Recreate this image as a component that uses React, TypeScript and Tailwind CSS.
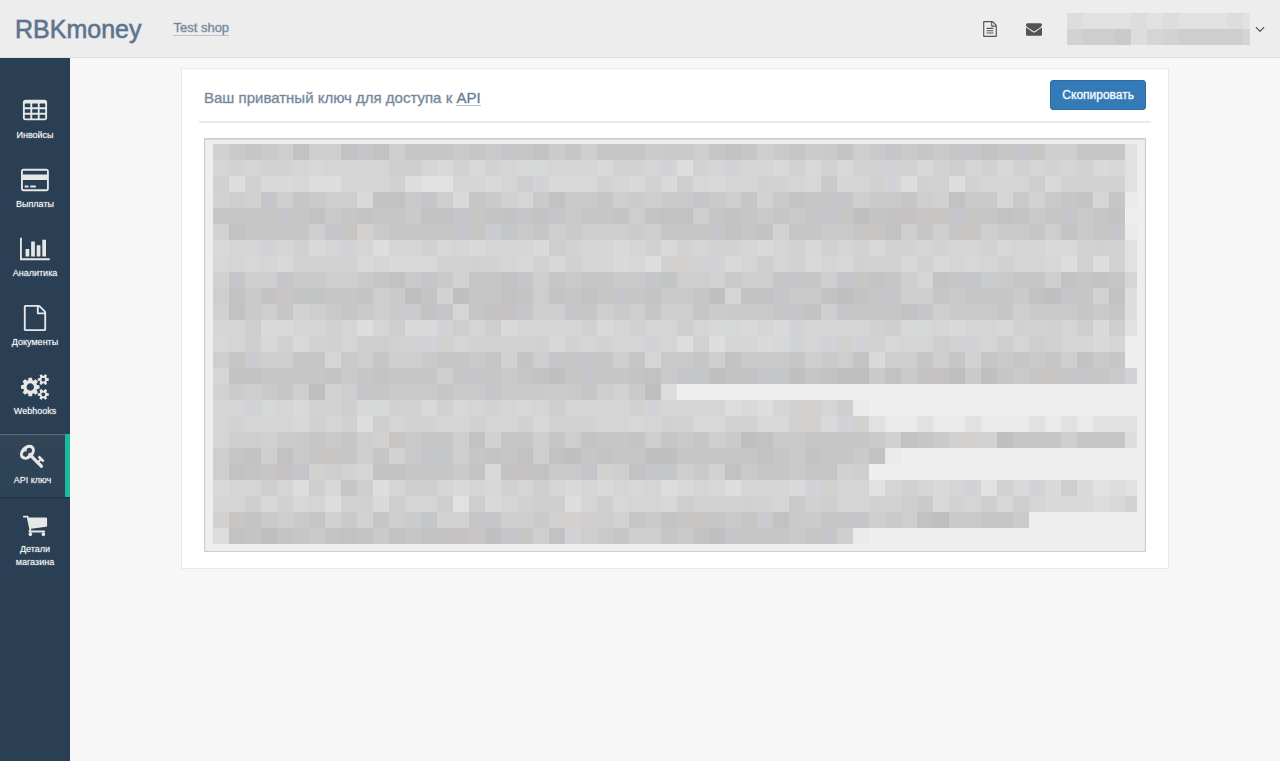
import React from "react";

const ICONS = {
  table:
    "M576 1376v-192q0-14-9-23t-23-9h-320q-14 0-23 9t-9 23v192q0 14 9 23t23 9h320q14 0 23-9t9-23zm0-384v-192q0-14-9-23t-23-9h-320q-14 0-23 9t-9 23v192q0 14 9 23t23 9h320q14 0 23-9t9-23zm512 384v-192q0-14-9-23t-23-9h-320q-14 0-23 9t-9 23v192q0 14 9 23t23 9h320q14 0 23-9t9-23zm-512-768v-192q0-14-9-23t-23-9h-320q-14 0-23 9t-9 23v192q0 14 9 23t23 9h320q14 0 23-9t9-23zm512 384v-192q0-14-9-23t-23-9h-320q-14 0-23 9t-9 23v192q0 14 9 23t23 9h320q14 0 23-9t9-23zm512 384v-192q0-14-9-23t-23-9h-320q-14 0-23 9t-9 23v192q0 14 9 23t23 9h320q14 0 23-9t9-23zm-512-768v-192q0-14-9-23t-23-9h-320q-14 0-23 9t-9 23v192q0 14 9 23t23 9h320q14 0 23-9t9-23zm512 384v-192q0-14-9-23t-23-9h-320q-14 0-23 9t-9 23v192q0 14 9 23t23 9h320q14 0 23-9t9-23zm0-384v-192q0-14-9-23t-23-9h-320q-14 0-23 9t-9 23v192q0 14 9 23t23 9h320q14 0 23-9t9-23zm128-320v1088q0 66-47 113t-113 47h-1344q-66 0-113-47t-47-113v-1088q0-66 47-113t113-47h1344q66 0 113 47t47 113z",
  card:
    "M1760 128q66 0 113 47t47 113v1216q0 66-47 113t-113 47h-1600q-66 0-113-47t-47-113v-1216q0-66 47-113t113-47h1600zm-1600 128q-13 0-22.5 9.5t-9.5 22.5v224h1664v-224q0-13-9.5-22.5t-22.5-9.5h-1600zm1600 1280q13 0 22.5-9.5t9.5-22.5v-608h-1664v608q0 13 9.5 22.5t22.5 9.5h1600zm-1504-128v-128h256v128h-256zm384 0v-128h384v128h-384z",
  chart:
    "M640 896v512h-256v-512h256zm384-512v1024h-256v-1024h256zm1024 1152v128h-2048v-1536h128v1408h1920zm-640-896v768h-256v-768h256zm384-384v1152h-256v-1152h256z",
  file:
    "M1596 380q28 28 48 76t20 88v1152q0 40-28 68t-68 28h-1344q-40 0-68-28t-28-68v-1600q0-40 28-68t68-28h896q40 0 88 20t76 48zm-444-244v376h376q-10-29-22-41l-313-313q-12-12-41-22zm384 1528v-1024h-416q-40 0-68-28t-28-68v-416h-768v1536h1280z",
  fileLines:
    "M512 800q0-14 9-23t23-9h704q14 0 23 9t9 23v64q0 14-9 23t-23 9h-704q-14 0-23-9t-9-23v-64zm736 224q14 0 23 9t9 23v64q0 14-9 23t-23 9h-704q-14 0-23-9t-9-23v-64q0-14 9-23t23-9h704zm0 256q14 0 23 9t9 23v64q0 14-9 23t-23 9h-704q-14 0-23-9t-9-23v-64q0-14 9-23t23-9h704z",
  cogs:
    "M896 896q0-106-75-181t-181-75-181 75-75 181 75 181 181 75 181-75 75-181zm768 512q0-52-38-90t-90-38-90 38-38 90q0 53 37.5 90.5t90.5 37.5 90.5-37.5 37.5-90.5zm0-1024q0-52-38-90t-90-38-90 38-38 90q0 53 37.5 90.5t90.5 37.5 90.5-37.5 37.5-90.5zm-384 421v185q0 10-7 19.5t-16 10.5l-155 24q-11 35-32 76 34 48 90 115 7 11 7 20 0 12-7 19-23 30-82.5 89.5t-78.5 59.5q-11 0-21-7l-115-90q-37 19-77 31-11 108-23 155-7 24-30 24h-186q-11 0-20-7.5t-10-17.5l-23-153q-34-10-75-31l-118 89q-7 7-20 7-11 0-21-8-144-133-144-160 0-9 7-19 10-14 41-53t47-61q-23-44-35-82l-152-24q-10-1-17-9.5t-7-19.5v-185q0-10 7-19.5t16-10.5l155-24q11-35 32-76-34-48-90-115-7-11-7-20 0-12 7-20 22-30 82-89t79-59q11 0 21 7l115 90q34-18 77-32 11-108 23-154 7-24 30-24h186q11 0 20 7.5t10 17.5l23 153q34 10 75 31l118-89q8-7 20-7 11 0 21 8 144 133 144 160 0 8-7 19-12 16-42 54t-45 60q23 48 34 82l152 23q10 2 17 10.5t7 19.5zm640 533v140q0 16-149 31-12 27-30 52 51 113 51 138 0 4-4 7-122 71-124 71-8 0-46-47t-52-68q-20 2-30 2t-30-2q-14 21-52 68t-46 47q-2 0-124-71-4-3-4-7 0-25 51-138-18-25-30-52-149-15-149-31v-140q0-16 149-31 13-29 30-52-51-113-51-138 0-4 4-7 4-2 35-20t59-34 30-16q8 0 46 46.5t52 67.5q20-2 30-2t30 2q51-71 92-112l6-2q4 0 124 70 4 3 4 7 0 25-51 138 17 23 30 52 149 15 149 31zm0-1024v140q0 16-149 31-12 27-30 52 51 113 51 138 0 4-4 7-122 71-124 71-8 0-46-47t-52-68q-20 2-30 2t-30-2q-14 21-52 68t-46 47q-2 0-124-71-4-3-4-7 0-25 51-138-18-25-30-52-149-15-149-31v-140q0-16 149-31 13-29 30-52-51-113-51-138 0-4 4-7 4-2 35-20t59-34 30-16q8 0 46 46.5t52 67.5q20-2 30-2t30 2q51-71 92-112l6-2q4 0 124 70 4 3 4 7 0 25-51 138 17 23 30 52 149 15 149 31z",
  key:
    "M832 512q0-80-56-136t-136-56-136 56-56 136q0 42 19 83-41-19-83-19-80 0-136 56t-56 136 56 136 136 56 136-56 56-136q0-42-19-83 41 19 83 19 80 0 136-56t56-136zm851 704q0 17-49 66t-66 49q-9 0-28.5-16t-36.5-33-38.5-40-24.5-26l-96 96 220 220q28 28 28 68 0 42-39 81t-81 39q-40 0-68-28l-671-671q-176 131-365 131-163 0-265.5-102.5t-102.5-265.5q0-160 95-313t248-248 313-95q163 0 265.5 102.5t102.5 265.5q0 189-131 365l355 355 96-96q-3-3-26-24.5t-40-38.5-33-36.5-16-28.5q0-17 49-66t66-49q13 0 23 10 6 6 46 44.5t82 79.5 86.5 86 73 78 28.5 41z",
  cart:
    "M704 1536q0 52-38 90t-90 38-90-38-38-90 38-90 90-38 90 38 38 90zm896 0q0 52-38 90t-90 38-90-38-38-90 38-90 90-38 90 38 38 90zm128-1088v512q0 24-16.5 42.5t-40.5 21.5l-1044 122q13 60 13 70 0 16-24 64h920q26 0 45 19t19 45-19 45-45 19h-1024q-26 0-45-19t-19-45q0-11 8-31.5t16-36 21.5-40 15.5-29.5l-177-823h-204q-26 0-45-19t-19-45 19-45 45-19h256q16 0 28.5 6.5t19.5 15.5 13 24.5 8 26 5.5 29.5 4.5 26h1201q26 0 45 19t19 45z",
  envelope:
    "M1792 710v794q0 66-47 113t-113 47h-1472q-66 0-113-47t-47-113v-794q44 49 101 87 362 246 497 345 57 42 92.5 65.5t94.5 48 110 24.5h2q51 0 110-24.5t94.5-48 92.5-65.5q170-123 498-345 57-39 100-87zm0-294q0 79-49 151t-122 123q-376 261-468 325-10 7-42.5 31t-54 38.5-52 32.5-57.5 27-50 9h-2q-23 0-50-9t-57.5-27-52-32.5-54-38.5-42.5-31q-91-64-262-182.5t-205-142.5q-62-42-117-115.5t-55-136.5q0-78 41.5-130t118.5-52h1472q65 0 112.5 47t47.5 113z",
  angleDown:
    "M1395 736q0 13-10 23l-466 466q-10 10-23 10t-23-10l-466-466q-10-10-10-23t10-23l50-50q10-10 23-10t23 10l393 393 393-393q10-10 23-10t23 10l50 50q10 10 10 23z",
};

function Icon({ d, width = 1792, className }: { d: string; width?: number; className: string }) {
  return (
    <svg viewBox={`0 0 ${width} 1792`} className={className} fill="currentColor" aria-hidden="true">
      <path d={d} />
    </svg>
  );
}

const SHADES: Record<string, string> = {
  "0": "#bfbfbf",
  "1": "#c2c2c2",
  "2": "#c6c6c6",
  "3": "#cacaca",
  "4": "#cecece",
  "5": "#d2d2d2",
  "6": "#d5d5d5",
  "7": "#d9d9d9",
  "8": "#dddddd",
  "9": "#e1e1e1",
  "-": "#eaeaea",
  w: "#c8c6c4",
  v: "#d2d1cf",
  g: "#c2c5c4",
  h: "#d5d8d7",
  n: "#cacccb",
  b: "#c4c6c9",
  a: "#d1d3d6",
  m: "#c9cbce",
  p: "#c5c2c3",
  q: "#d0cdce",
};

const KEY_ROWS = [
  "v3w341441b14222323 b21nw4222n334212432n 3g43b3w32b1wbw44w229",
  "656556h66664467575 6hh6667556a856a66757 57655a5h546vhv65657h9".replace("57655", "5755"),
  "v8v77h88666v899667 64a77756757 4h766v56h 366va8v58566647555 59",
  "54vb423447p13b4723 v63133w4n433b34w53g2 2b433w4v133635 3wg6w-",
  "w22wb213wg22311bwg pbpb32wg4g1142p23w32 bw0gppwwbw21g3wb32p.",
  "5122224bwv3w22wbwm b3w43444n422wb12p52w 33ww1424ww433w4g3wb-",
  "766a6v76a6866vh676 66745667 6v756556765h v6575565665h66775v59",
  "h6h67555576777 55v5 6h5hv667h8vv5a764657 6hv55h576h6v66h85859",
  "vb44b33q43w13b35w2 1b4w32w33bg445344 2b2 4bwg246g2bm3224p2p26",
  "4p3pwgg22g430g5022 1g4gw1wb2g332061 1b33 p0p2b44w3w2231 0b2518",
  "v134w543w343mpb62p pb44b24342442n3332bp 4b2221b4333w43332328",
  "6647766v686477a464 76666v76v6646hh767a6 666v4hh6766hv5v64749",
  "h64hv75v644v5av655 55vh56566a685 8667ha6 ava5h6645a6464v6676.",
  "4wm44226342443w232 vg4b2b2426332 4p33324 34g744w4252323w4p32.",
  "6p1w222g32gw2242b2 32p0wb22g13bb0p1bb02 p003 13pp03023ww2b23a",
  "5n432405qb2333w33b 333n3245308......... ....................",
  "66ah67554hhv57vh65 6h646666va6666 8786vv 6q-.................",
  "65666hv6v8465566v6 6vh55566h6v5775577vv7 av9--9--9---9-9-999-",
  "644vn323w4vw32w41v 2242 4g2wg4w3w4301332 2223v1w3vv5022w4w228",
  "42p413ww24253bb4wg w1410wg2200222221 23p 2231-...............",
  "q1gwpbv456p12w23g7 pp133bv41bb435132w32 2v4.................",
  "7664684h248644676h v646767 6h6876h86667a v6696v676a957a7q7989",
  "664hvh685v74664947 6v44864h66h4555v563v 466v54 37564h467778759",
  "vwg3q32v3524nb552b 443vvq4523gww23wm13n w2b434 1033 22n.......",
  "81g0g23g1g3121ppw0 bw41a43244w3p0b2w23w b4-.................",
].map((row) => row.replace(/ /g, ""));

const USER_ROWS = ["899989899989", "544386544446"];

function Mosaic({
  rows,
  width,
  label,
  className,
}: {
  rows: string[];
  width: number;
  label: string;
  className: string;
}) {
  return (
    <svg
      role="img"
      aria-label={label}
      viewBox={`0 0 ${width} ${rows.length * 16}`}
      preserveAspectRatio="none"
      shapeRendering="crispEdges"
      className={className}
    >
      {rows.map((row, y) =>
        [...row].map((cell, x) =>
          SHADES[cell] ? (
            <rect key={`${x}-${y}`} x={x * 16} y={y * 16} width={16} height={16} fill={SHADES[cell]} />
          ) : null,
        ),
      )}
    </svg>
  );
}

const NAV = [
  { label: "Инвойсы", icon: ICONS.table },
  { label: "Выплаты", icon: ICONS.card, width: 1920 },
  { label: "Аналитика", icon: ICONS.chart, width: 2048 },
  { label: "Документы", icon: ICONS.file },
  { label: "Webhooks", icon: ICONS.cogs, width: 1920 },
  { label: "API ключ", icon: ICONS.key, active: true },
  { label: "Детали магазина", icon: ICONS.cart },
];

export default function App() {
  return (
    <div className="flex min-h-screen flex-col bg-[#f7f7f7] font-['Liberation_Sans',Arial,sans-serif] text-[#73879c]">
      <header className="flex h-[58px] items-center border-b border-[#d9dee4] bg-[#ededed] pr-3 pl-[15px]">
        <a href="#" className="pt-[2px] text-[25px] font-medium text-[#5a738e] [-webkit-text-stroke:1px_#5a738e99]">
          RBKmoney
        </a>
        <a
          href="#"
          className="ml-8 border-b border-[#b4c4d6] text-[13px] leading-[14px] [-webkit-text-stroke:1px_#73879c55]"
        >
          Test shop
        </a>
        <div className="ml-auto flex items-center text-[#515356]">
          <button type="button" aria-label="Документы" className="mr-7">
            <Icon d={ICONS.file + ICONS.fileLines} className="h-4 w-4" />
          </button>
          <button type="button" aria-label="Сообщения" className="mr-[25px]">
            <Icon d={ICONS.envelope} className="h-4 w-4" />
          </button>
          <button type="button" aria-label="Меню пользователя" className="flex items-center gap-[2px]">
            <Mosaic rows={USER_ROWS} width={183} label="Пользователь" className="h-8 w-[183px]" />
            <Icon d={ICONS.angleDown} className="h-4 w-4" />
          </button>
        </div>
      </header>

      <div className="flex flex-1">
        <nav className="w-[70px] shrink-0 bg-[#2a3f54] pt-[31px]">
          <ul className="flex flex-col gap-[6px]">
            {NAV.map((item) => (
              <li key={item.label}>
                <a
                  href="#"
                  aria-current={item.active ? "page" : undefined}
                  className={
                    item.active
                      ? "flex flex-col items-center gap-[5px] border-r-[5px] border-[#1abb9c] bg-linear-to-b from-[#334556] to-[#2c4257] pt-[9px] pb-[10px] text-[#e7e7e7] shadow-[inset_0_1px_0_#5b6b7b,0_1px_0_#1d2f42]"
                      : "flex flex-col items-center gap-[5px] px-[5px] pt-[9px] pb-[10px] text-[#e7e7e7]"
                  }
                >
                  <Icon d={item.icon} width={item.width} className="h-[26px] w-auto" />
                  <span className="text-center text-[9px] leading-[13px] font-medium text-white [-webkit-text-stroke:1px_#ffffff33]">
                    {item.label}
                  </span>
                </a>
              </li>
            ))}
          </ul>
        </nav>

        <main className="min-w-0 flex-1 px-5 py-[10px]">
          <section className="mx-auto max-w-[988px] border border-[#e6e9ed] bg-white px-[17px] pt-[11px] pb-4">
            <div className="flex items-start justify-between border-b-2 border-[#e6e9ed] px-[5px] pb-[11px]">
              <h1 className="pt-[9px] text-[15px] leading-[18px] font-medium [-webkit-text-stroke:1px_#73879c55]">
                <label htmlFor="api-key">Ваш приватный ключ для доступа к </label>
                <a href="#" className="inline-block border-b border-[#b4c4d6] leading-[15px] text-[#5a738e]">
                  API
                </a>
              </h1>
              <button
                type="button"
                className="h-[30px] rounded-[3px] border border-[#2e6da4] bg-[#337ab7] px-[11px] text-[12px] text-white [-webkit-text-stroke:1px_#ffffff55]"
              >
                Скопировать
              </button>
            </div>
            <div className="relative mx-[5px] mt-[15px]">
              <textarea
                id="api-key"
                readOnly
                className="block h-[414px] w-full resize-none border border-[#cccccc] bg-[#eeeeee] shadow-[inset_0_1px_1px_#d8d8d8]"
              />
              <Mosaic
                rows={KEY_ROWS}
                width={924}
                label="Приватный ключ скрыт"
                className="pointer-events-none absolute top-[6px] left-[9px] h-[400px] w-[calc(100%-18px)]"
              />
            </div>
          </section>
        </main>
      </div>
    </div>
  );
}
